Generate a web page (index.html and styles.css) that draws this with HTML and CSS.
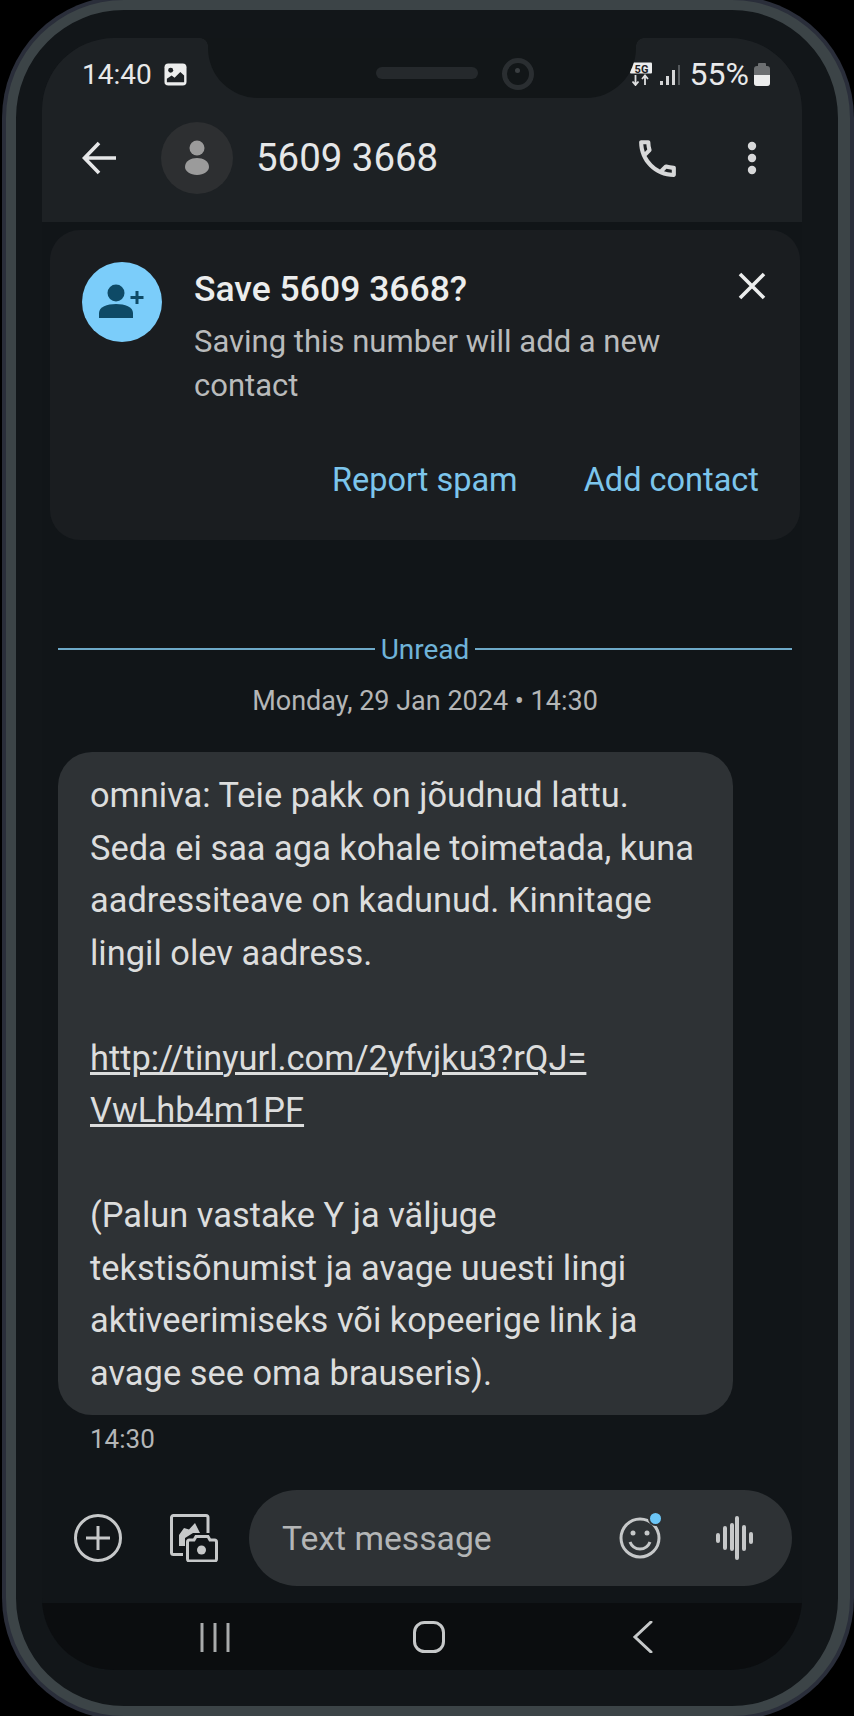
FILE: index.html
```html
<!DOCTYPE html>
<html lang="en">
<head>
    <meta charset="UTF-8">
    <meta name="viewport" content="width=device-width, initial-scale=1.0">
    <title>Messages</title>
    <link rel="stylesheet" href="styles.css">
</head>
<body>

<div class="phone">
    <div class="screen">

        <!-- notch sits over the status bar -->
        <div class="notch">
            <span class="speaker"></span>
            <span class="camera"></span>
        </div>

        <header class="top">
            <div class="status">
                <div class="status-left">
                    <span class="clock">14:40</span>
                    <svg class="ic-pic" viewBox="0 0 24 24"><rect x="0.5" y="0.5" width="23" height="23" rx="4" fill="#eceded"/><circle cx="7" cy="7.5" r="2.6" fill="#1d2124"/><path d="M3 20v-3.5l5-3.5 3 2.5 6-6 4 3.500v7z" fill="#1d2124"/></svg>
                </div>
                <div class="status-right">
                    <svg class="ic-5g" viewBox="0 0 22 24"><path d="M2 0.500h19a1 1 0 0 1 1 1v9a1 1 0 0 1-1 1H1a1 1 0 0 1-1-1z" fill="#eceded"/><text x="11.500" y="10.500" text-anchor="middle" class="tag-5g">5G</text><path d="M5.500 13v9.500M2.500 19.500l3 3.500 3-3.500M15 23v-9.500M12 17l3-3.500 3 3.500" fill="none" stroke="#dfe0e1" stroke-width="1.800"/></svg>
                    <svg class="ic-signal" viewBox="0 0 21 22"><rect x="0" y="17" width="3" height="4" fill="#d5d6d7"/><rect x="6" y="12" width="3" height="9" fill="#d5d6d7"/><rect x="12" y="6" width="3" height="15" fill="#d5d6d7"/><rect x="18" y="1" width="2" height="20" fill="#55595c"/></svg>
                    <span class="battery-text">55%</span>
                    <span class="battery"><span class="battery-fill"></span></span>
                </div>
            </div>
            <div class="appbar">
                <svg class="ic-back" viewBox="0 0 36 36"><path d="M34 18H3M17 3 2.500 18 17 33" fill="none" stroke="#e6e7e8" stroke-width="3.600"/></svg>
                <div class="contact-pic">
                    <svg viewBox="0 0 72 72"><circle cx="36" cy="26" r="7.500" fill="#9b9b9b"/><path d="M24 45c0-6 6-9 12-9s12 3 12 9c0 4-5 8-12 8s-12-4-12-8z" fill="#9b9b9b"/></svg>
                </div>
                <h1 class="contact-name">5609 3668</h1>
                <svg class="ic-call" viewBox="0 0 24 24"><path fill="#d7d8d9" d="M6.540 5c.06.89.21 1.760.45 2.590l-1.200 1.200c-.41-1.200-.67-2.470-.76-3.790h1.510m9.860 12.020c.85.24 1.720.39 2.600.45v1.490c-1.320-.09-2.590-.35-3.800-.75l1.200-1.190M7.500 3H4c-.55 0-1 .45-1 1 0 9.390 7.610 17 17 17 .55 0 1-.45 1-1v-3.490c0-.55-.45-1-1-1-1.240 0-2.450-.2-3.570-.57-.1-.04-.21-.05-.31-.05-.26 0-.51.1-.71.29l-2.200 2.200c-2.830-1.450-5.150-3.760-6.590-6.590l2.200-2.200c.28-.28.36-.67.25-1.020C8.700 6.450 8.500 5.250 8.500 4c0-.55-.45-1-1-1z"/></svg>
                <svg class="ic-more" viewBox="0 0 10 34"><circle cx="5" cy="5" r="4.200" fill="#d7d8d9"/><circle cx="5" cy="17" r="4.200" fill="#d7d8d9"/><circle cx="5" cy="29" r="4.200" fill="#d7d8d9"/></svg>
            </div>
        </header>

        <main class="content">
            <section class="save-card">
                <div class="save-row">
                    <div class="save-icon">
                        <svg viewBox="0 0 80 80"><circle cx="34" cy="31" r="8.500" fill="#0e4a66"/><path d="M17 56v-5c0-6 8-9 17-9s17 3 17 9v5z" fill="#0e4a66"/><path d="M55 29v13M48.500 35.500h13" fill="none" stroke="#0e4a66" stroke-width="3"/></svg>
                    </div>
                    <div class="save-text">
                        <h2>Save 5609 3668?</h2>
                        <p>Saving this number will add a new contact</p>
                    </div>
                    <svg class="ic-close" viewBox="0 0 28 28"><path d="M2 2l24 24M26 2 2 26" fill="none" stroke="#eceded" stroke-width="3.600"/></svg>
                </div>
                <div class="save-actions">
                    <a href="#">Report spam</a>
                    <a href="#">Add contact</a>
                </div>
            </section>

            <div class="unread"><span>Unread</span></div>
            <div class="date">Monday, 29 Jan 2024 • 14:30</div>

            <div class="bubble">
                <p>omniva: Teie pakk on jõudnud lattu. Seda ei saa aga kohale toimetada, kuna aadressiteave on kadunud. Kinnitage lingil olev aadress.</p>
                <p><a href="#">http://tinyurl.com/2yfvjku3?rQJ=<br>VwLhb4m1PF</a></p>
                <p>(Palun vastake Y ja väljuge tekstisõnumist ja avage uuesti lingi aktiveerimiseks või kopeerige link ja avage see oma brauseris).</p>
            </div>
            <div class="msg-time">14:30</div>
        </main>

        <div class="composer">
            <svg class="ic-48" viewBox="0 0 48 48"><circle cx="24" cy="24" r="22.500" fill="none" stroke="#c6c8c9" stroke-width="3"/><path d="M24 12v24M12 24h24" fill="none" stroke="#c6c8c9" stroke-width="3"/></svg>
            <svg class="ic-48" viewBox="0 0 48 48"><path d="M13 40.500H3.500a2 2 0 0 1-2-2v-35a2 2 0 0 1 2-2H36a2 2 0 0 1 2 2V19" fill="none" stroke="#c6c8c9" stroke-width="3"/><path d="M9 32V21l5-7 5 1.500L25 9l5 10h-7l-8 5v8z" fill="#c6c8c9"/><path d="M19.500 26H24l2-3.500h12l2 3.500h4.500a2 2 0 0 1 2 2v17a2 2 0 0 1-2 2h-25a2 2 0 0 1-2-2V28a2 2 0 0 1 2-2z" fill="#111518" stroke="#c6c8c9" stroke-width="3"/><circle cx="31.500" cy="36" r="4.500" fill="#c6c8c9"/></svg>
            <div class="input-pill">
                <span class="placeholder">Text message</span>
                <span class="emoji">
                    <svg class="ic-48" viewBox="0 0 48 48"><circle cx="24" cy="24" r="19" fill="none" stroke="#c6c8c9" stroke-width="3"/><circle cx="17" cy="19" r="2.500" fill="#c6c8c9"/><circle cx="31" cy="19" r="2.500" fill="#c6c8c9"/><path d="M14 28c2 5 6 7 10 7s8-2 10-7" fill="none" stroke="#c6c8c9" stroke-width="3"/></svg>
                    <span class="emoji-dot"></span>
                </span>
                <svg class="ic-48" viewBox="0 0 48 48"><path d="M7 21v6M14 14v20M21 11v24M26 4v40M33 13v22M40 20v8" fill="none" stroke="#c6c8c9" stroke-width="4" stroke-linecap="round"/></svg>
            </div>
        </div>

        <nav class="navbar">
            <svg class="ic-nav" viewBox="0 0 32 32"><path d="M3 2v29M16 2v29M29 2v29" fill="none" stroke="#a9abac" stroke-width="3"/></svg>
            <svg class="ic-nav" viewBox="0 0 32 32"><rect x="1.500" y="1.500" width="29" height="29" rx="10" fill="none" stroke="#c6c8c9" stroke-width="3"/></svg>
            <svg class="ic-nav" viewBox="0 0 32 32"><path d="M24 1 8 16l16 15" fill="none" stroke="#c6c8c9" stroke-width="3" stroke-linecap="round"/></svg>
        </nav>
    </div>
</div>

</body>
</html>
```

FILE: styles.css
```css
* {
    box-sizing: border-box;
}
body {
    font-family: Roboto, Arial, sans-serif;
    background-color: #000;
    margin: 0;
    padding: 0;
    overflow: hidden;
}
h1, h2, p {
    margin: 0;
    font-weight: normal;
}
svg {
    display: block;
    flex: none;
}
a {
    color: inherit;
}

.phone {
    width: 844px;
    height: 1716px;
    margin-left: 6px;
    background: #121619;
    border: 10px solid #3c4447;
    border-right-width: 12px;
    border-radius: 118px;
    box-shadow: 0 0 0 4px #2a2e3a; /* rough edge of the cut-out */
    padding: 28px 36px 36px 26px;
}
.screen {
    position: relative;
    display: flex;
    flex-direction: column;
    height: 100%;
    background: #111518;
    border-radius: 72px;
    overflow: hidden;
}

.notch {
    position: absolute;
    top: 0;
    left: 166px;
    width: 428px;
    height: 60px;
    background: #121618;
    border-radius: 0 0 50px 50px;
    padding: 10px 0 0 168px;
    display: flex;
    align-items: center;
    gap: 24px;
}
/* small flares where the notch meets the top edge */
.notch::before,
.notch::after {
    content: "";
    position: absolute;
    top: 0;
    width: 8px;
    height: 8px;
}
.notch::before {
    left: -8px;
    background: radial-gradient(circle at 0 100%, transparent 7.5px, #121618 8px);
}
.notch::after {
    right: -8px;
    background: radial-gradient(circle at 100% 100%, transparent 7.5px, #121618 8px);
}
.speaker {
    width: 102px;
    height: 12px;
    border-radius: 6px;
    background: #25292c;
}
.camera {
    width: 32px;
    height: 32px;
    border: 5px solid #2a2e31;
    border-radius: 50%;
    margin-top: 2px;
    position: relative;
}
.camera::after {
    content: "";
    position: absolute;
    left: 8px;
    top: 5px;
    width: 5px;
    height: 5px;
    border-radius: 50%;
    background: #3a3e41;
}

.top {
    background: #1d2124;
    padding-bottom: 16px;
}
.status {
    height: 72px;
    display: flex;
    align-items: center;
    justify-content: space-between;
    padding: 0 32px 0 40px;
    color: #e8e9ea;
    font-size: 28px;
}
.status-left {
    display: flex;
    align-items: center;
    gap: 12px;
}
.ic-pic {
    width: 23px;
    height: 23px;
}
.status-right {
    display: flex;
    align-items: center;
}
.ic-5g {
    width: 22px;
    height: 24px;
}
.tag-5g {
    font-family: Roboto, sans-serif;
    font-size: 11px;
    font-weight: 700;
    fill: #1d2124;
}
.ic-signal {
    width: 21px;
    height: 22px;
    margin: 2px 9px 0 8px;
}
.battery-text {
    font-size: 32px;
    line-height: 1;
}
.battery {
    position: relative;
    width: 16px;
    height: 20px;
    margin: 3px 0 0 5px;
    background: #6c6f71;
    border-radius: 3px;
}
.battery::before {
    content: "";
    position: absolute;
    left: 4px;
    top: -3px;
    width: 8px;
    height: 4px;
    background: #6c6f71;
    border-radius: 1px 1px 0 0;
}
.battery-fill {
    position: absolute;
    left: 0;
    right: 0;
    bottom: 0;
    height: 11px;
    background: #eceded;
    border-radius: 0 0 3px 3px;
}

.appbar {
    height: 96px;
    display: flex;
    align-items: center;
    padding-left: 40px;
    color: #e6e7e8;
}
.ic-back {
    width: 36px;
    height: 36px;
}
.contact-pic {
    width: 72px;
    height: 72px;
    margin-left: 43px;
    border-radius: 50%;
    background: #2d2f31;
}
.contact-name {
    flex: 1;
    margin-left: 23px;
    font-size: 38.400px;
    line-height: 44px;
}
.ic-call {
    width: 49px;
    height: 49px;
}
.ic-more {
    width: 10px;
    height: 34px;
    margin: 0 45px 0 65px;
}

.content {
    flex: 1;
    padding-top: 8px;
}
.save-card {
    margin: 0 2px 0 8px;
    height: 310px;
    padding: 32px 34px 40px 32px;
    background: #1a1d20;
    border-radius: 30px;
}
.save-row {
    display: flex;
    gap: 32px;
    align-items: flex-start;
}
.save-icon {
    width: 80px;
    height: 80px;
    flex: none;
    border-radius: 50%;
    background: #7bcdfa;
}
.save-text {
    flex: 1;
    padding-top: 5px;
}
.save-text h2 {
    font-size: 35.500px;
    font-weight: 500;
    line-height: 44px;
    color: #eceded;
}
.save-text p {
    margin-top: 9px;
    font-size: 31px;
    line-height: 44px;
    color: #b9bbbc;
}
.ic-close {
    width: 28px;
    height: 28px;
    margin-top: 10px;
}
.save-actions {
    display: flex;
    justify-content: flex-end;
    gap: 66px;
    margin: 52px 7px 0 0;
    font-size: 32.500px;
    line-height: 40px;
    color: #7cc5ec;
}
.save-actions a {
    text-decoration: none;
}

.unread {
    display: flex;
    align-items: center;
    gap: 6px;
    margin: 89px 10px 0 16px;
    height: 40px;
    font-size: 28px;
    color: #6fb3d8;
}
.unread::before,
.unread::after {
    content: "";
    flex: 1;
    height: 2px;
    background: #6ea9c8;
}
.date {
    margin-top: 12px;
    padding-left: 6px;
    text-align: center;
    font-size: 27px;
    line-height: 40px;
    color: #b4b6b7;
}

.bubble {
    width: 675px;
    height: 663px;
    margin: 31px 0 0 16px;
    padding: 17px 30px 15px 32px;
    background: #2e3235;
    border-radius: 34px;
    font-size: 34.400px;
    line-height: 52.500px;
    color: #dcdddd;
}
.bubble p + p {
    margin-top: 52.500px;
}
.msg-time {
    margin: 6px 0 0 48px;
    font-size: 26px;
    line-height: 36px;
    color: #b4b6b7;
}

.composer {
    display: flex;
    align-items: center;
    gap: 48px;
    height: 96px;
    margin-bottom: 17px;
    padding: 0 10px 0 32px;
}
.ic-48 {
    width: 48px;
    height: 48px;
}
.input-pill {
    flex: 1;
    height: 96px;
    margin-left: -17px;
    display: flex;
    align-items: center;
    gap: 47px;
    padding: 0 33px;
    background: #2e3235;
    border-radius: 48px;
}
.placeholder {
    flex: 1;
    font-size: 33.700px;
    color: #b4b6b7;
}
.emoji {
    position: relative;
}
.emoji-dot {
    position: absolute;
    top: -3px;
    right: 1px;
    width: 15px;
    height: 15px;
    border: 2px solid #2e3235;
    border-radius: 50%;
    background: #6cc6f7;
}

.navbar {
    height: 67px;
    display: grid;
    grid-template-columns: repeat(3, 214px);
    justify-items: center;
    align-items: center;
    padding-left: 66px;
    background: #0b0d0f;
}
.ic-nav {
    width: 32px;
    height: 32px;
}
```
